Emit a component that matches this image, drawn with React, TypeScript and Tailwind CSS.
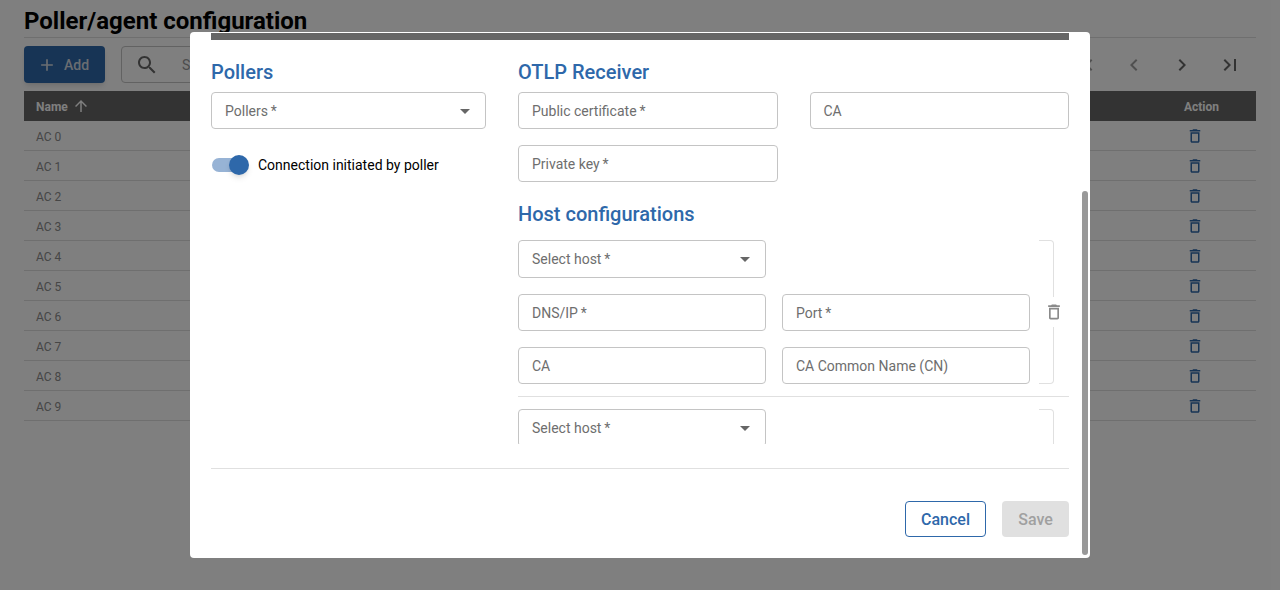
import React from 'react';

const ICONS = {
  trash: 'M6 19c0 1.1.9 2 2 2h8c1.1 0 2-.9 2-2V7H6v12zM8 9h8v10H8V9zm7.5-5l-1-1h-5l-1 1H5v2h14V4z',
  drop: 'M7 10l5 5 5-5z',
  search:
    'M15.5 14h-.79l-.28-.27C15.41 12.59 16 11.11 16 9.5 16 5.91 13.09 3 9.5 3S3 5.91 3 9.5 5.91 16 9.5 16c1.61 0 3.09-.59 4.23-1.57l.27.28v.79l5 4.99L20.49 19l-4.99-5zm-6 0C7.01 14 5 11.99 5 9.5S7.01 5 9.5 5 14 7.01 14 9.5 11.99 14 9.5 14z',
  add: 'M19 13h-6v6h-2v-6H5v-2h6V5h2v6h6v2z',
  up: 'M4 12l1.41 1.41L11 7.83V20h2V7.83l5.58 5.59L20 12l-8-8-8 8z',
  left: 'M15.41 7.41L14 6l-6 6 6 6 1.41-1.41L10.83 12z',
  right: 'M10 6L8.59 7.41 13.17 12l-4.58 4.59L10 18l6-6z',
  last: 'M5.59 7.41L10.18 12l-4.59 4.59L7 18l6-6-6-6zM16 6h2v12h-2z',
  first: 'M18.41 16.59L13.82 12l4.59-4.59L17 6l-6 6 6 6zM6 6h2v12H6z',
};

const Icon = ({ d, className }: { d: string; className: string }) => (
  <svg viewBox="0 0 24 24" fill="currentColor" className={className}>
    <path d={d} />
  </svg>
);

const Field = ({ label, select, className = '' }: { label: string; select?: boolean; className?: string }) => (
  <div
    className={`flex h-[37px] items-center justify-between rounded-[4px] border border-[#c4c4c4] pl-[13px] pr-[8px] text-sm text-[#6e6e6e] ${className}`}
  >
    <span>{label}</span>
    {select && <Icon d={ICONS.drop} className="h-6 w-6 text-[#666666]" />}
  </div>
);

const rows = ['AC 0', 'AC 1', 'AC 2', 'AC 3', 'AC 4', 'AC 5', 'AC 6', 'AC 7', 'AC 8', 'AC 9'];

const Page = () => (
  <div className="px-6">
    <h1 className="h-[38px] border-b border-[#dedede] pt-[4px] text-2xl font-bold leading-[34px] text-black">
      Poller/agent configuration
    </h1>
    <div className="mt-2 flex h-[37px] items-center">
      <button className="flex h-[37px] w-[81px] items-center gap-[7px] rounded-[4px] bg-[#2e68aa] pl-[13px] text-sm font-medium text-[#d4dae2] shadow-md">
        <Icon d={ICONS.add} className="h-5 w-5" />
        Add
      </button>
      <div className="ml-4 flex h-[37px] w-[400px] items-center rounded-[4px] border border-[#c4c4c4] pl-[13px] text-sm text-[#999999]">
        <Icon d={ICONS.search} className="h-6 w-6 text-[#666666]" />
        <span className="ml-[23px]">Search</span>
      </div>
      <div className="ml-auto flex items-center gap-6 pr-[14px] text-[#666666]">
        <Icon d={ICONS.first} className="h-6 w-6 text-[#a0a0a0]" />
        <Icon d={ICONS.left} className="h-6 w-6 text-[#a0a0a0]" />
        <Icon d={ICONS.right} className="h-6 w-6" />
        <Icon d={ICONS.last} className="h-6 w-6" />
      </div>
    </div>
    <div className="mt-2 flex h-[30px] items-center justify-between bg-[#666666] pl-3 pr-[37px] text-xs font-bold text-white">
      <span className="flex items-center gap-[4px]">
        <span className="pt-px">Name</span>
        <Icon d={ICONS.up} className="h-[18px] w-[18px]" />
      </span>
      <span className="pt-px">Action</span>
    </div>
    {rows.map((name) => (
      <div
        key={name}
        className="flex h-[30px] items-center justify-between border-b border-[#dedede] pl-3 pr-[52px] text-xs text-[#8c8c8c]"
      >
        <span className="pt-[2px]">{name}</span>
        <Icon d={ICONS.trash} className="h-[18px] w-[18px] text-[#2e68aa]" />
      </div>
    ))}
  </div>
);

const HostGroup = ({ withFields }: { withFields?: boolean }) => (
  <div className="flex">
    <div className="grid w-[512px] grid-cols-2 gap-x-4 gap-y-4">
      <Field label={'Select host\u2009*'} select className="col-span-1 h-[38px]" />
      <div />
      {withFields && (
        <>
          <Field label={'DNS/IP\u2009*'} />
          <Field label={'Port\u2009*'} />
          <Field label="CA" />
          <Field label="CA Common Name (CN)" />
        </>
      )}
    </div>
    <div
      className={`relative ml-[9px] flex w-[15px] items-center justify-center rounded-r-[4px] border border-l-0 border-[#e0e0e0] ${
        withFields ? '' : 'h-[60px]'
      }`}
    >
      {withFields && (
        <div className="absolute left-[5px] bg-white py-[5px]">
          <Icon d={ICONS.trash} className="h-5 w-5 text-[#8a8a8a]" />
        </div>
      )}
    </div>
  </div>
);

const Modal = () => (
  <div className="absolute left-[190px] top-[32px] flex h-[526px] w-[900px] flex-col overflow-hidden rounded-[4px] bg-white pt-[1px]">
    <div className="mx-[21px] h-[7px] shrink-0 bg-[#666666]" />
    <div className="flex h-[404px] shrink-0 gap-8 overflow-hidden px-[21px] pt-[20px]">
      <div className="w-[275px] shrink-0">
        <h2 className="h-[32px] text-xl font-medium leading-[24px] text-[#2e68aa]">Pollers</h2>
        <Field label={'Pollers\u2009*'} select />
        <div className="mt-[26px] flex h-5 items-center">
          <div className="relative ml-px h-[14px] w-[34px] rounded-full bg-[#97b3d5]">
            <div className="absolute left-[17px] top-[-3px] h-5 w-5 rounded-full bg-[#2e68aa] shadow-md" />
          </div>
          <span className="ml-[12px] text-sm text-black">Connection initiated by poller</span>
        </div>
      </div>
      <div className="w-[551px] shrink-0">
        <h2 className="h-[32px] text-xl font-medium leading-[24px] text-[#2e68aa]">OTLP Receiver</h2>
        <div className="grid grid-cols-2 gap-x-8 gap-y-4">
          <Field label={'Public certificate\u2009*'} />
          <Field label="CA" />
          <Field label={'Private key\u2009*'} />
        </div>
        <h2 className="mt-[20px] h-[38px] text-xl font-medium leading-[24px] text-[#2e68aa]">Host configurations</h2>
        <HostGroup withFields />
        <div className="my-3 border-t border-[#e0e0e0]" />
        <HostGroup />
      </div>
    </div>
    <div className="mx-[21px] mt-[24px] border-t border-[#e0e0e0]" />
    <div className="mx-[21px] mt-[32px] flex justify-end gap-4">
      <button className="h-[36px] w-[81px] rounded-[4px] border border-[#2e68aa] pt-px text-base font-medium text-[#2e68aa]">
        Cancel
      </button>
      <button className="h-[36px] w-[67px] rounded-[4px] bg-[#e0e0e0] pt-px text-base font-medium text-[#a0a0a0]">
        Save
      </button>
    </div>
    <div className="absolute right-[2px] top-[159px] h-[364px] w-[6px] rounded-full bg-[#999999]" />
  </div>
);

export default function App() {
  return (
    <div className="relative h-[590px] w-[1280px] overflow-hidden bg-white font-[Roboto,sans-serif]">
      <Page />
      <div className="absolute inset-0 bg-black/50" />
      <Modal />
    </div>
  );
}
